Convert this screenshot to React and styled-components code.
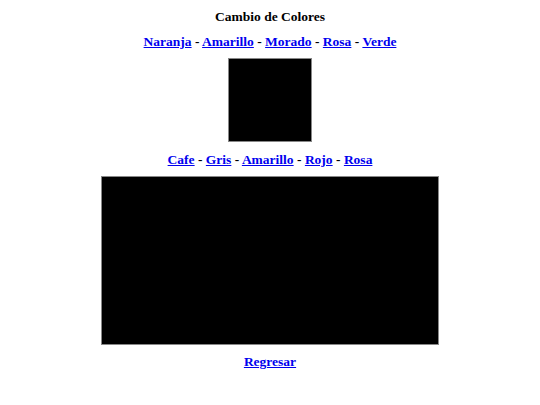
import React, { useState } from 'react'
import styled, { createGlobalStyle } from 'styled-components';

const GlobalStyle = createGlobalStyle`
  body {
    margin: 0;
    background: #ffffff;
    font-family: "Liberation Serif", "Times New Roman", serif;
  }
`;

const topColors = ['Naranja', 'Amarillo', 'Morado', 'Rosa', 'Verde'];
const bottomColors = ['Cafe', 'Gris', 'Amarillo', 'Rojo', 'Rosa'];

const colorMap = {
  Naranja: 'orange',
  Amarillo: 'yellow',
  Morado: 'purple',
  Rosa: 'pink',
  Verde: 'green',
  Cafe: 'saddlebrown',
  Gris: 'gray',
  Rojo: 'red',
};

function LinkRow({ colors, onPick }) {
  return (
    <Row>
      {colors.map((c, i) => (
        <React.Fragment key={c + i}>
          {i > 0 && ' - '}
          <ColorLink href="#" onClick={(e) => { e.preventDefault(); onPick(colorMap[c]); }}>
            {c}
          </ColorLink>
        </React.Fragment>
      ))}
    </Row>
  );
}

function App() {
  const [small, setSmall] = useState('#000');
  const [big, setBig] = useState('#000');

  return (
    <Page>
      <GlobalStyle />
      <Title>Cambio de Colores</Title>
      <LinkRow colors={topColors} onPick={setSmall} />
      <SmallBox $color={small} />
      <LinkRow colors={bottomColors} onPick={setBig} />
      <BigBox $color={big} />
      <Back href="#">Regresar</Back>
    </Page>
  );
}

const Page = styled.div`
  display: flex;
  flex-direction: column;
  align-items: center;
  padding-top: 9px;
  font-size: 13.5px;
  font-weight: bold;
  line-height: 16px;
  color: #000;
`;

const Title = styled.div``;

const Row = styled.div`
  margin-top: 9px;
`;

const ColorLink = styled.a`
  color: #0000ee;
  text-decoration: underline;
`;

const SmallBox = styled.div`
  margin: 8px 0 1px;
  width: 82px;
  height: 82px;
  background: ${(p) => p.$color};
  border: 1px solid #888;
`;

const BigBox = styled.div`
  margin-top: 8px;
  width: 336px;
  height: 167px;
  background: ${(p) => p.$color};
  border: 1px solid #888;
`;

const Back = styled.a`
  margin-top: 9px;
  color: #0000ee;
  text-decoration: underline;
`;

export default App
